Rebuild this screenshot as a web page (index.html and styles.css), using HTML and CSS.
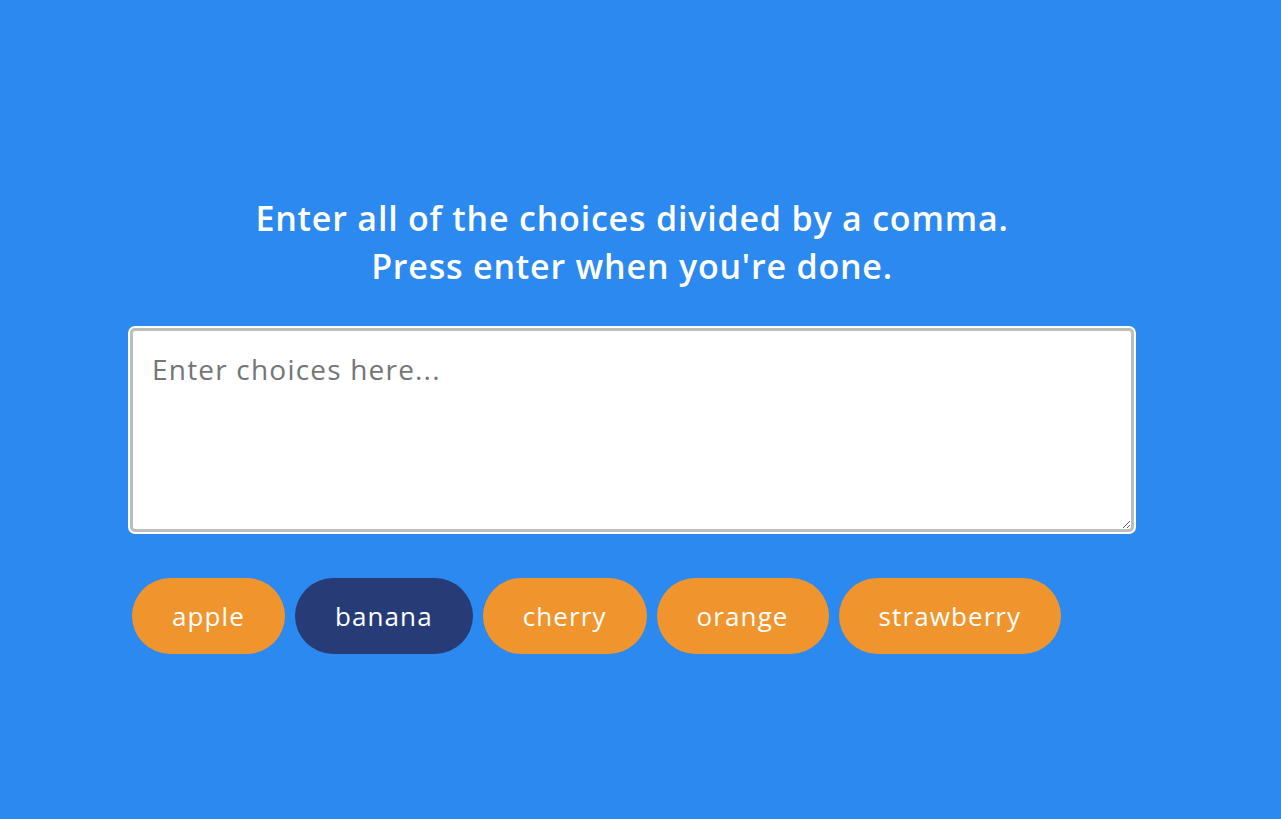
FILE: index.html
```html
<!DOCTYPE html>
<html lang="en">
<head>
<meta charset="utf-8">
<title>Choice Picker</title>
<link rel="stylesheet" href="styles.css">
</head>
<body>
<div class="container">
  <h3 class="title">Enter all of the choices divided by a comma.<br>Press enter when you're done.</h3>
  <textarea class="choices" placeholder="Enter choices here..."></textarea>
  <div class="tags">
    <span class="tag">apple</span>
    <span class="tag highlight">banana</span>
    <span class="tag">cherry</span>
    <span class="tag">orange</span>
    <span class="tag">strawberry</span>
  </div>
</div>
</body>
</html>
```
FILE: styles.css
```css
* { box-sizing: border-box; }
html, body {
  margin: 0;
  padding: 0;
}
body {
  background: #2b89ef;
  font-family: "Open Sans", "Lato", sans-serif;
  color: #fff;
  height: 819px;
  overflow: hidden;
}
.container {
  width: 1008px;
  margin-left: 128px;
  padding-top: 194px;
}
.title {
  margin: 0 0 38px;
  text-align: center;
  font-size: 34px;
  font-weight: 600;
  line-height: 48px;
  letter-spacing: 0.8px;
}
.choices {
  display: block;
  width: 1004px;
  height: 204px;
  margin: 2px;
  border: 3px solid #bdbdbd;
  border-radius: 5px;
  box-shadow: 0 0 0 2px #fff;
  padding: 19px 19px;
  font-family: inherit;
  font-size: 28px;
  letter-spacing: 1.2px;
  color: #333;
  outline: none;
}
.choices::placeholder {
  color: #757575;
}
.tags {
  display: flex;
  gap: 10px;
  margin-top: 46px;
  padding-left: 4px;
}
.tag {
  display: inline-flex;
  align-items: center;
  justify-content: center;
  height: 76px;
  padding: 0 40px;
  border-radius: 38px;
  background: #f0952d;
  font-size: 26px;
  letter-spacing: 1.1px;
  color: #fff;
}
.tag.highlight {
  background: #273c77;
}
```
